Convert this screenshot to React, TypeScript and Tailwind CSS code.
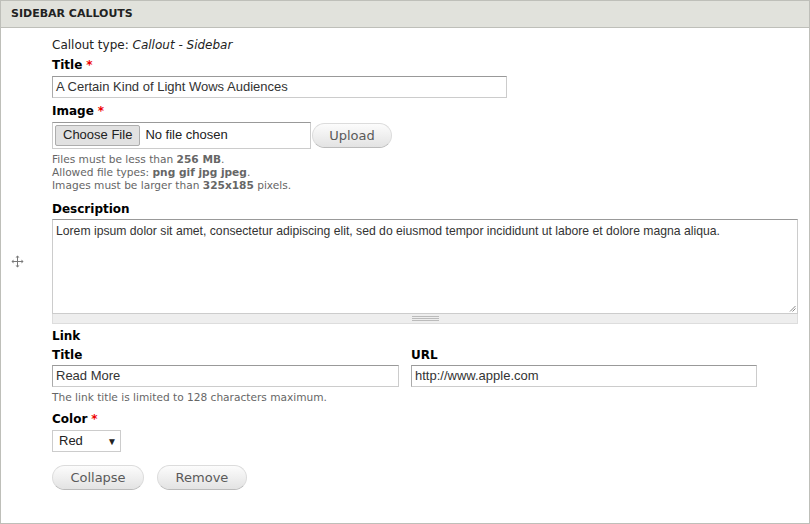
import React from "react";

const sans = "font-['DejaVu_Sans',Verdana,sans-serif]";
const arial = "font-['Liberation_Sans',Arial,sans-serif]";

function Label({ children, required }: { children: React.ReactNode; required?: boolean }) {
  return (
    <div className={`${sans} h-[18px] text-[12px] leading-[18px] font-bold text-black`}>
      {children}
      {required && <span className="ml-[4px] text-[#e00]">*</span>}
    </div>
  );
}

function TextBox({ value, className }: { value: string; className?: string }) {
  return (
    <div
      className={`${arial} h-[22px] border border-[#ccc] border-t-[#999] border-l-[#aaa] bg-white px-[3px] text-[13px] leading-[20px] text-[#333] ${className ?? ""}`}
    >
      {value}
    </div>
  );
}

function PillButton({ children, className }: { children: React.ReactNode; className?: string }) {
  return (
    <button
      className={`${sans} h-[25px] rounded-full border border-[#dcdcdc] border-b-[#bbb] bg-gradient-to-b from-[#fcfcfc] to-[#e3e3e3] text-[13px] leading-[22px] text-[#5a5a5a] ${className ?? ""}`}
    >
      {children}
    </button>
  );
}

function MoveIcon() {
  return (
    <svg width="13" height="13" viewBox="0 0 13 13" className="text-[#7a7a7a]">
      <path d="M6.5 1v11M1 6.5h11" stroke="currentColor" strokeWidth="1" />
      <path d="M6.5 0.5l-2 2h4zM6.5 12.5l-2-2h4zM0.5 6.5l2-2v4zM12.5 6.5l-2-2v4z" fill="currentColor" />
    </svg>
  );
}

export default function App() {
  return (
    <div className="h-[524px] w-[810px] bg-white">
      <div className="h-[524px] w-[810px] border border-[#bebfb9]">
        <div className={`${sans} h-[27px] border-b border-[#bebfb9] bg-[#e1e2dc] pl-[10px] text-[11px] leading-[26px] font-bold uppercase text-[#222]`}>
          Sidebar Callouts
        </div>

        <div className="flex">
          <div className="flex w-[51px] justify-center pt-[227px] pr-[18px]">
            <MoveIcon />
          </div>

          <div className="w-[747px] pt-[8px]">
            <div className={`${sans} h-[18px] text-[12px] leading-[18px] text-[#222]`}>
              Callout type: <em>Callout - Sidebar</em>
            </div>

            <div className="mt-[2px]">
              <Label required>Title</Label>
              <TextBox value="A Certain Kind of Light Wows Audiences" className="mt-[2px] w-[455px]" />
            </div>

            <div className="mt-[4px]">
              <Label required>Image</Label>
              <div className="mt-[2px] flex items-center">
                <div className={`${arial} flex h-[27px] w-[259px] items-center border border-[#ccc] border-t-[#999] pl-[2px] text-[13px] text-[#222]`}>
                  <span className="flex h-[21px] items-center rounded-[2px] border border-[#adadad] bg-[#e1e1e1] px-[7px] pb-px">Choose File</span>
                  <span className="ml-[5px] pb-px">No file chosen</span>
                </div>
                <PillButton className="ml-[1px] w-[80px]">Upload</PillButton>
              </div>
              <div className={`${sans} mt-[4px] text-[10.6px] leading-[13px] text-[#666]`}>
                <div>
                  Files must be less than <strong>256 MB</strong>.
                </div>
                <div>
                  Allowed file types: <strong>png gif jpg jpeg</strong>.
                </div>
                <div>
                  Images must be larger than <strong>325x185</strong> pixels.
                </div>
              </div>
            </div>

            <div className="mt-[8px]">
              <Label>Description</Label>
              <div className="mt-[1px] w-[746px]">
                <div className="relative h-[95px] border border-[#ccc] border-t-[#999] bg-white">
                  <div className={`${arial} px-[3px] pt-[2px] text-[12.2px] leading-[18px] text-[#333]`}>
                    Lorem ipsum dolor sit amet, consectetur adipiscing elit, sed do eiusmod tempor incididunt ut labore et dolore magna aliqua.
                  </div>
                  <svg width="7" height="7" viewBox="0 0 7 7" className="absolute right-[1px] bottom-[1px]">
                    <path d="M1 6.5L6.5 1M3.5 6.5L6.5 3.5" stroke="#888" strokeWidth="1" />
                  </svg>
                </div>
                <div className="flex h-[10px] items-center justify-center border border-t-0 border-[#ddd] bg-[#eee]">
                  <div className="flex w-[27px] flex-col gap-[1px]">
                    <div className="h-px bg-[#bbb]" />
                    <div className="h-px bg-[#bbb]" />
                    <div className="h-px bg-[#bbb]" />
                  </div>
                </div>
              </div>
            </div>

            <div className="mt-[3px]">
              <Label>Link</Label>
              <div className="mt-[1px] flex gap-[12px]">
                <div className="w-[347px]">
                  <Label>Title</Label>
                  <TextBox value="Read More" className="mt-[1px]" />
                </div>
                <div className="w-[346px]">
                  <Label>URL</Label>
                  <TextBox value="http://www.apple.com" className="mt-[1px]" />
                </div>
              </div>
              <div className={`${sans} mt-[4px] text-[10.6px] leading-[13px] text-[#666]`}>
                The link title is limited to 128 characters maximum.
              </div>
            </div>

            <div className="mt-[6px]">
              <Label required>Color</Label>
              <div className={`${arial} mt-[2px] flex h-[22px] w-[69px] items-center justify-between border border-[#ccc] pl-[6px] pr-[3px] text-[13px] text-[#222]`}>
                <span>Red</span>
                <span className="text-[10px]">▼</span>
              </div>
            </div>

            <div className="mt-[13px] flex gap-[13px]">
              <PillButton className="w-[92px]">Collapse</PillButton>
              <PillButton className="w-[90px]">Remove</PillButton>
            </div>
          </div>
        </div>
      </div>
    </div>
  );
}
